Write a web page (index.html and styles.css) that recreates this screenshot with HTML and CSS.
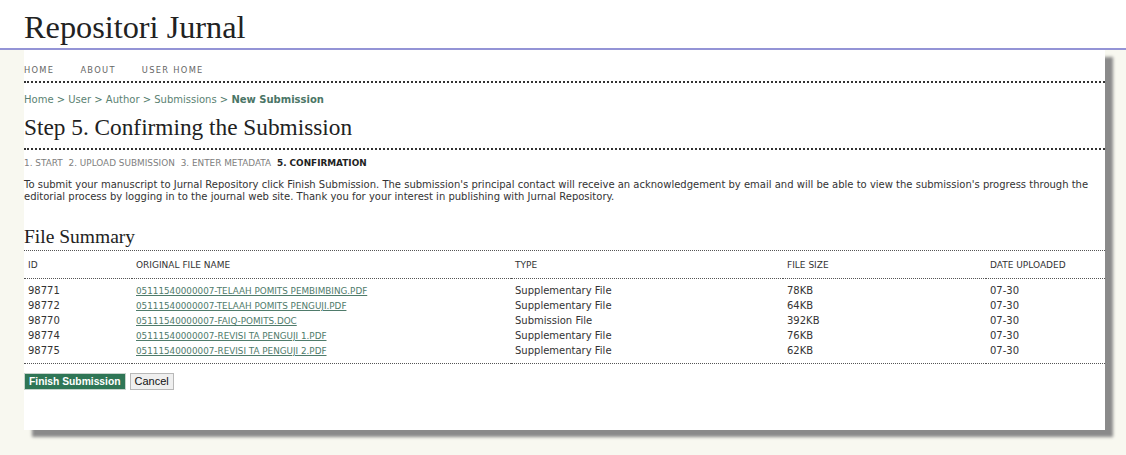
FILE: index.html
```html
<!DOCTYPE html>
<html>
<head>
<meta charset="utf-8">
<title>Repositori Jurnal</title>
<link rel="stylesheet" href="styles.css">
</head>
<body>
<div class="header">
  <h1 class="site-title">Repositori Jurnal</h1>
</div>
<div class="page">
  <div class="navbar">
    <a class="nav-link" href="#">Home</a>
    <a class="nav-link" href="#">About</a>
    <a class="nav-link" href="#">User Home</a>
  </div>
  <div class="breadcrumb">
    <a href="#">Home</a> &gt; <a href="#">User</a> &gt; <a href="#">Author</a> &gt; <a href="#">Submissions</a> &gt; <a class="current" href="#">New Submission</a>
  </div>
  <h2 class="page-title">Step 5. Confirming the Submission</h2>
  <div class="steps">
    <span class="step">1. Start</span>
    <span class="step">2. Upload Submission</span>
    <span class="step">3. Enter Metadata</span>
    <span class="step active">5. Confirmation</span>
  </div>
  <p class="intro">To submit your manuscript to Jurnal Repository click Finish Submission. The submission's principal contact will receive an acknowledgement by email and will be able to view the submission's progress through the editorial process by logging in to the journal web site. Thank you for your interest in publishing with Jurnal Repository.</p>
  <h3 class="section-title">File Summary</h3>
  <table class="files">
    <colgroup>
      <col class="c-id"><col class="c-name"><col class="c-type"><col class="c-size"><col class="c-date">
    </colgroup>
    <thead>
      <tr><th>ID</th><th>Original File Name</th><th>Type</th><th>File Size</th><th>Date Uploaded</th></tr>
    </thead>
    <tbody>
      <tr><td>98771</td><td><a href="#">05111540000007-TELAAH POMITS PEMBIMBING.PDF</a></td><td>Supplementary File</td><td>78KB</td><td>07-30</td></tr>
      <tr><td>98772</td><td><a href="#">05111540000007-TELAAH POMITS PENGUJI.PDF</a></td><td>Supplementary File</td><td>64KB</td><td>07-30</td></tr>
      <tr><td>98770</td><td><a href="#">05111540000007-FAIQ-POMITS.DOC</a></td><td>Submission File</td><td>392KB</td><td>07-30</td></tr>
      <tr><td>98774</td><td><a href="#">05111540000007-REVISI TA PENGUJI 1.PDF</a></td><td>Supplementary File</td><td>76KB</td><td>07-30</td></tr>
      <tr class="last"><td>98775</td><td><a href="#">05111540000007-REVISI TA PENGUJI 2.PDF</a></td><td>Supplementary File</td><td>62KB</td><td>07-30</td></tr>
    </tbody>
  </table>
  <div class="actions">
    <button class="btn btn-primary" type="button">Finish Submission</button>
    <button class="btn btn-cancel" type="button">Cancel</button>
  </div>
</div>
</body>
</html>
```
FILE: styles.css
```css
html, body {
  margin: 0;
  padding: 0;
}
body {
  background: #f8f8f0;
  font-family: "DejaVu Sans", Verdana, sans-serif;
  font-size: 11px;
  color: #333;
  height: 455px;
  overflow: hidden;
}
.header {
  background: #fff;
  height: 48px;
  border-bottom: 2px solid #9494d6;
  padding-left: 24px;
  box-sizing: content-box;
}
.site-title {
  margin: 0;
  padding-top: 11px;
  font-family: "Liberation Serif", "Times New Roman", serif;
  font-weight: normal;
  font-size: 32.3px;
  line-height: 32px;
  color: #222;
}
.page {
  background: #fff;
  margin: 0 21px 0 24px;
  height: 380px;
  box-shadow: 8px 7px 3px #8a8a8a;
}
.navbar {
  display: flex;
  padding-top: 15px;
  height: 16px;
  border-bottom: 2px dotted #333;
}
.nav-link {
  font-size: 8.3px;
  letter-spacing: 1.3px;
  text-transform: uppercase;
  color: #666;
  text-decoration: none;
  line-height: 10px;
  margin-right: 26px;
}
.breadcrumb {
  padding-top: 11px;
  font-size: 10px;
  line-height: 12px;
  color: #507a6a;
}
.breadcrumb a {
  color: #5b8272;
  text-decoration: none;
}
.breadcrumb a.current {
  color: #4a7566;
  font-weight: bold;
}
.page-title {
  margin: 8px 0 0;
  font-family: "Liberation Serif", "Times New Roman", serif;
  font-weight: normal;
  font-size: 23.3px;
  line-height: 26px;
  color: #222;
  padding-bottom: 8px;
  border-bottom: 2px dotted #333;
}
.steps {
  padding-top: 8px;
  font-size: 8.9px;
  line-height: 10px;
  text-transform: uppercase;
  color: #808080;
}
.step {
  margin-right: 3px;
}
.step.active {
  font-weight: bold;
  color: #222;
}
.intro {
  margin: 11px 0 0;
  font-size: 10px;
  line-height: 12px;
  color: #333;
}
.section-title {
  margin: 23px 0 0;
  font-family: "Liberation Serif", "Times New Roman", serif;
  font-weight: normal;
  font-size: 19.5px;
  line-height: 22px;
  color: #222;
  padding-bottom: 2px;
  border-bottom: 1px dotted #555;
}
.files {
  width: 100%;
  border-collapse: collapse;
  table-layout: fixed;
}
.c-id { width: 108px; }
.c-name { width: 379px; }
.c-type { width: 272px; }
.c-size { width: 203px; }
.c-date { width: auto; }
.files th {
  text-align: left;
  font-weight: normal;
  font-size: 9px;
  text-transform: uppercase;
  color: #333;
  padding: 9px 4px 8px;
  line-height: 10px;
  border-bottom: 1px dotted #555;
}
.files td {
  padding: 0 4px;
  height: 15px;
  line-height: 15px;
  font-size: 10px;
  color: #333;
}
.files tbody tr:first-child td {
  padding-top: 4px;
}
.files tr.last td {
  padding-bottom: 5px;
  border-bottom: 1px dotted #555;
}
.files td a {
  color: #4f7b6b;
  font-size: 8.8px;
  line-height: 1;
}
.actions {
  display: flex;
  gap: 4px;
  padding-top: 9px;
}
.btn {
  font-family: "Liberation Sans", Arial, sans-serif;
  font-size: 11px;
  height: 17px;
  line-height: 13px;
  margin: 0;
  cursor: pointer;
}
.btn-primary {
  background: #2f7656;
  color: #fff;
  font-weight: bold;
  font-size: 10.3px;
  border: 1px solid #c7d4cc;
  padding: 0 4px;
}
.btn-cancel {
  background: #efefef;
  color: #111;
  border: 1px solid #b8b8b8;
  padding: 0 4px;
}
```
